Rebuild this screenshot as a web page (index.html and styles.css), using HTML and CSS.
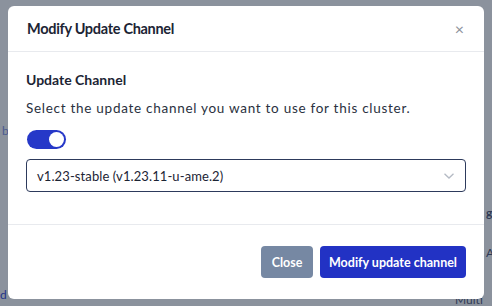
FILE: index.html
```html
<!DOCTYPE html>
<html lang="en">
<head>
	<meta charset="UTF-8">
	<title>Modify Update Channel</title>
	<link rel="stylesheet" href="styles.css">
</head>
<body>
	<div class="page">
		<span class="bg bg-b">b</span>
		<span class="bg bg-d">d</span>
		<span class="bg bg-g">g</span>
		<span class="bg bg-a">A</span>
		<span class="bg bg-multi">Multi av</span>
	</div>
	<div class="overlay">
		<div class="modal">
			<div class="modal-header">
				<h2 class="modal-title">Modify Update Channel</h2>
				<span class="close-x">&times;</span>
			</div>
			<div class="modal-body">
				<h3 class="field-title">Update Channel</h3>
				<p class="field-help">Select the update channel you want to use for this cluster.</p>
				<div class="toggle"><div class="knob"></div></div>
				<div class="select">
					<span>v1.23-stable (v1.23.11-u-ame.2)</span>
					<svg width="12" height="8" viewBox="0 0 12 8"><path d="M1.5 1.8 L6 6 L10.5 1.8" fill="none" stroke="#b4bac4" stroke-width="1.3"/></svg>
				</div>
			</div>
			<div class="modal-footer">
				<button class="btn btn-close">Close</button>
				<button class="btn btn-primary">Modify update channel</button>
			</div>
		</div>
	</div>
</body>
</html>
```

FILE: styles.css
```css
*{
	box-sizing: border-box;
}
body{
	margin: 0;
	width: 492px;
	height: 306px;
	overflow: hidden;
	font-family: Lato, "Noto Sans", sans-serif;
	color: #1c2434;
	background: #8b929d;
	position: relative;
}
.page{
	width: 492px;
	height: 306px;
}
.bg{
	position: absolute;
	font-size: 12px;
	line-height: 12px;
	color: #2f3a55;
}
.bg-b{
	left: 2px;
	top: 125px;
	color: #4a5a90;
}
.bg-d{
	left: 0;
	top: 289px;
	color: #23338a;
}
.bg-g{
	left: 486px;
	top: 207px;
	font-weight: bold;
}
.bg-a{
	left: 486px;
	top: 247px;
}
.bg-multi{
	left: 455px;
	top: 294px;
}
.overlay{
	position: absolute;
	top: 0;
	left: 0;
	width: 492px;
	height: 306px;
	padding: 6px 8px;
}
.modal{
	width: 476px;
	height: 293px;
	background: #fff;
	border-radius: 6px;
	display: flex;
	flex-direction: column;
}
.modal-header{
	height: 46px;
	border-bottom: 1px solid #e8eaee;
	display: flex;
	align-items: center;
	justify-content: space-between;
	padding: 0 20px 0 19px;
}
.modal-title{
	margin: 0;
	font-size: 14.5px;
	font-weight: bold;
	letter-spacing: -0.3px;
	color: #1c2434;
}
.close-x{
	font-size: 16px;
	color: #8c929c;
	line-height: 1;
}
.modal-body{
	padding: 19px 18px 0 18px;
	flex: 1;
	border-bottom: 1px solid #e8eaee;
}
.field-title{
	margin: 0;
	font-size: 14px;
	font-weight: bold;
	line-height: 18px;
}
.field-help{
	margin: 10px 0 0 0;
	font-size: 13.5px;
	letter-spacing: 0.72px;
	line-height: 18px;
	color: #2a3140;
}
.toggle{
	margin: 13px 0 0 1px;
	width: 39px;
	height: 19px;
	border-radius: 10px;
	background: #2638c8;
	position: relative;
}
.knob{
	position: absolute;
	right: 2px;
	top: 2px;
	width: 15px;
	height: 15px;
	border-radius: 50%;
	background: #fff;
}
.select{
	margin-top: 10px;
	width: 440px;
	height: 33px;
	border: 1px solid #2d3a5c;
	border-radius: 4px;
	display: flex;
	align-items: center;
	justify-content: space-between;
	padding: 0 10px 0 10px;
	font-size: 13px;
	letter-spacing: 0.1px;
	color: #1c2434;
}
.modal-footer{
	height: 74px;
	display: flex;
	justify-content: flex-end;
	align-items: center;
	gap: 7px;
	padding: 0 18px 0 0;
}
.btn{
	height: 32px;
	border: none;
	border-radius: 4px;
	font-family: Lato, "Noto Sans", sans-serif;
	font-size: 12.5px;
	font-weight: bold;
	color: #fff;
	padding: 0;
	white-space: nowrap;
}
.btn-close{
	background: #7688a3;
	width: 52px;
}
.btn-primary{
	background: #2232c4;
	width: 146px;
}
```
